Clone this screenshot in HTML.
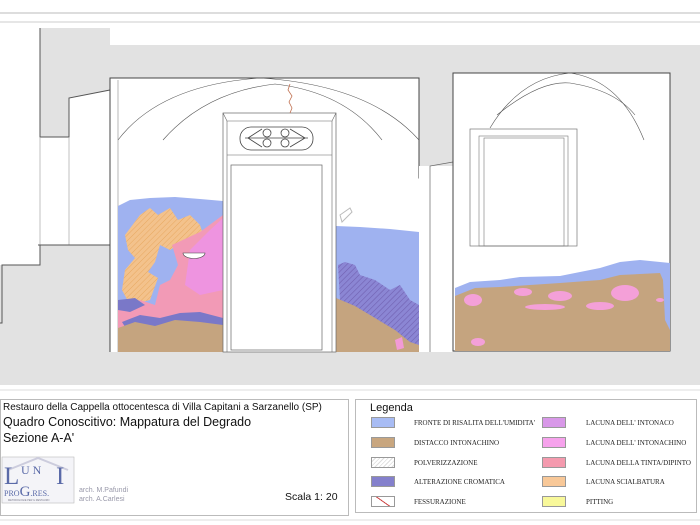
<!DOCTYPE html>
<html><head><meta charset="utf-8"><style>
body{margin:0;width:700px;height:525px;background:#fff;overflow:hidden;font-family:"Liberation Sans",sans-serif}
svg{position:absolute;left:0;top:0}
.t{position:absolute;white-space:nowrap;color:#111}
.lg{position:absolute;font-family:"Liberation Serif",serif;font-size:7px;color:#222}
.sw{position:absolute;width:24px;height:11px;border:1px solid #999;box-sizing:border-box}
</style></head><body>
<svg width="700" height="525" viewBox="0 0 700 525">
<defs>
<pattern id="h" width="4" height="4" patternUnits="userSpaceOnUse" patternTransform="rotate(45)"><line x1="0" y1="0" x2="0" y2="4" stroke="#7060b0" stroke-width="1.2"/></pattern>
<pattern id="ho" width="4" height="4" patternUnits="userSpaceOnUse" patternTransform="rotate(45)"><line x1="0" y1="0" x2="0" y2="4" stroke="#e8a860" stroke-width="1"/></pattern>
</defs>
<line x1="0" y1="13" x2="700" y2="13" stroke="#bbb"/>
<line x1="0" y1="22" x2="700" y2="22" stroke="#ccc"/>
<rect x="0" y="28" width="700" height="357" fill="#e2e2e2"/>
<rect x="0" y="28" width="40" height="237" fill="#fff"/>
<rect x="110" y="28" width="590" height="17" fill="#fff"/>
<polygon points="40,137 69,137 69,98 110,90 110,245 40,245" fill="#fff"/>
<polyline points="40,28 40,137 69,137 69,98 110,90" fill="none" stroke="#555"/>
<line x1="69" y1="137" x2="69" y2="245" stroke="#999" stroke-width=".6"/>
<line x1="40" y1="137" x2="40" y2="245" stroke="#999" stroke-width=".6"/>
<polyline points="38,245 110,245" stroke="#555" stroke-width="1"/>
<polyline points="0,323 2,323 2,265 40,265 40,245" fill="none" stroke="#555"/>
<rect x="110" y="78" width="309" height="274" fill="#fff"/>
<polyline points="110,352 110,78 419,78 419,178 430,178" fill="none" stroke="#444"/>
<line x1="118" y1="80" x2="118" y2="352" stroke="#888" stroke-width=".6"/>
<rect x="419" y="166" width="34" height="186" fill="#fff"/>
<polyline points="430,352 430,166 453,162" fill="none" stroke="#666" stroke-width=".7"/>
<rect x="453" y="73" width="217" height="278" fill="#fff" stroke="#444"/>
<path d="M118,206 L130,200 150,198 175,197 200,199 223,201 L223,352 L118,352Z" fill="#9fb2f0"/>
<path d="M125,235 L140,215 150,208 158,215 170,208 178,220 190,215 200,225 205,240 195,250 185,240 170,250 160,245 155,262 148,272 158,278 150,300 130,305 122,290 125,270 135,258 128,250Z" fill="#f3c28c"/>
<path d="M125,235 L140,215 150,208 158,215 170,208 178,220 190,215 200,225 205,240 195,250 185,240 170,250 160,245 155,262 148,272 158,278 150,300 130,305 122,290 125,270 135,258 128,250Z" fill="url(#ho)"/>
<path d="M172,245 L200,232 223,215 L223,330 L118,335 118,310 140,300 155,305 160,285 170,280 178,265Z" fill="#f29ab6"/>
<path d="M190,250 L210,230 223,218 L223,290 200,295 185,285Z" fill="#ee94e0"/>
<path d="M118,300 L135,298 145,305 130,312 118,310Z M122,322 L140,315 160,318 180,313 200,312 223,318 L223,330 160,330 130,335Z" fill="#7a78c8"/>
<path d="M118,328 L135,322 155,326 175,320 200,322 223,325 L223,352 L118,352Z" fill="#c5a47f"/>
<path d="M183,253 A10,5 0 0 0 205,253Z" fill="#fff" stroke="#444" stroke-width=".6"/>
<path d="M336,226 L360,227 390,229 419,232 L419,352 L336,352Z" fill="#9fb2f0"/>
<path d="M338,265 L345,262 355,265 360,275 375,280 390,290 400,285 410,300 419,305 L419,345 L400,340 385,325 370,315 355,310 340,300Z" fill="#8b86d4"/>
<path d="M338,265 L345,262 355,265 360,275 375,280 390,290 400,285 410,300 419,305 L419,345 L400,340 385,325 370,315 355,310 340,300Z" fill="url(#h)"/>
<path d="M336,298 L355,306 375,318 395,330 410,342 419,345 L419,352 L336,352Z" fill="#c5a47f"/>
<path d="M395,340 L402,337 404,348 397,350Z" fill="#f29ad6"/>
<path d="M340,215 L350,208 352,212 342,222Z" fill="none" stroke="#bbb"/>
<path d="M455,288 L470,282 500,280 520,277 560,276 600,268 620,262 640,260 670,263 L670,351 L455,351Z" fill="#9fb2f0"/>
<path d="M455,296 L475,288 500,287 530,285 560,283 600,280 620,275 660,273 663,280 665,320 670,330 L670,351 L455,351Z" fill="#c5a47f"/>
<g fill="#f4a0d8">
<ellipse cx="473" cy="300" rx="9" ry="6"/><ellipse cx="523" cy="292" rx="9" ry="4"/><ellipse cx="560" cy="296" rx="12" ry="5"/>
<ellipse cx="600" cy="306" rx="14" ry="4"/><ellipse cx="625" cy="293" rx="14" ry="8"/><ellipse cx="545" cy="307" rx="20" ry="3"/>
<ellipse cx="478" cy="342" rx="7" ry="4"/><ellipse cx="660" cy="300" rx="4" ry="2"/>
</g>
<path d="M118,140 Q160,85 260,78 Q370,85 419,140" fill="none" stroke="#555" stroke-width=".6"/>
<path d="M163,140 Q205,92 275,84 Q345,92 382,140" fill="none" stroke="#555" stroke-width=".6"/>
<path d="M490,128 Q520,78 570,73 Q620,80 644,140" fill="none" stroke="#555" stroke-width=".6"/>
<path d="M497,115 Q540,80 570,83 Q615,90 635,115" fill="none" stroke="#555" stroke-width=".6"/>
<rect x="223" y="113" width="113" height="239" fill="#fff" stroke="#666" stroke-width=".7"/>
<polyline points="223,113 227,121 332,121 336,113" fill="none" stroke="#666" stroke-width=".6"/>
<line x1="227" y1="155" x2="332" y2="155" stroke="#666" stroke-width=".6"/>
<line x1="227" y1="121" x2="227" y2="352" stroke="#666" stroke-width=".6"/>
<line x1="332" y1="121" x2="332" y2="352" stroke="#666" stroke-width=".6"/>
<rect x="231" y="165" width="91" height="185" fill="#fff" stroke="#666" stroke-width=".7"/>
<rect x="240" y="127" width="73" height="23" rx="11" fill="none" stroke="#444" stroke-width=".8"/>
<g fill="none" stroke="#444" stroke-width=".8"><circle cx="267" cy="133" r="4"/><circle cx="267" cy="143" r="4"/><circle cx="285" cy="133" r="4"/><circle cx="285" cy="143" r="4"/><path d="M248,138 L262,129 M248,138 L262,147 M305,138 L290,129 M305,138 L290,147 M245,138 H308"/></g>
<path d="M290,84 L288,90 292,96 289,102 292,108 290,113" fill="none" stroke="#c07050" stroke-width=".8"/>
<rect x="470" y="129" width="107" height="117" fill="#fff" stroke="#777" stroke-width=".7"/>
<rect x="479" y="136" width="89" height="110" fill="none" stroke="#777" stroke-width=".6"/>
<rect x="484" y="138" width="80" height="108" fill="none" stroke="#777" stroke-width=".6"/>
<line x1="0" y1="390" x2="700" y2="390" stroke="#ddd"/>
<rect x="0.5" y="399.5" width="348" height="116" fill="#fff" stroke="#bbb"/>
<rect x="355.5" y="399.5" width="341" height="113" fill="#fff" stroke="#bbb"/>
<line x1="0" y1="520" x2="700" y2="520" stroke="#ddd"/>
<rect x="2" y="457" width="72" height="46" fill="#f4f4f8" stroke="#bbb" stroke-width=".6"/>
<polyline points="8,470 38,458 68,470" fill="none" stroke="#ccd" stroke-width="2"/>
<text x="4" y="484" font-family="Liberation Serif" font-size="25" fill="#5a6aa8">L</text>
<text x="21" y="474" font-family="Liberation Serif" font-size="12" fill="#5a6aa8">U N</text>
<text x="56" y="484" font-family="Liberation Serif" font-size="25" fill="#5a6aa8">I</text>
<text x="4" y="496" font-family="Liberation Serif" font-size="8" fill="#5a6aa8">PRO<tspan font-size="15">G</tspan>.RES.</text>
<text x="8" y="501" font-family="Liberation Sans" font-size="2.5" fill="#778">METODOLOGIE PER IL RESTAURO</text>
</svg>
<div class="t" style="left:3px;top:402px;font-size:10px">Restauro della Cappella ottocentesca di Villa Capitani a Sarzanello (SP)</div>
<div class="t" style="left:3px;top:415px;font-size:12.5px">Quadro Conoscitivo: Mappatura del Degrado</div>
<div class="t" style="left:3px;top:431px;font-size:12.5px">Sezione A-A'</div>
<div class="t" style="left:79px;top:486px;font-size:7px;color:#99a;line-height:9px">arch. M.Pafundi<br>arch. A.Carlesi</div>
<div class="t" style="left:285px;top:491px;font-size:10.5px">Scala 1: 20</div>
<div class="t" style="left:370px;top:402px;font-size:11px">Legenda</div>
<div class="sw" style="left:371px;top:417px;background:#a8bcf4"></div>
<div class="sw" style="left:371px;top:437px;background:#c8a67f"></div>
<div class="sw" style="left:371px;top:457px;background:repeating-linear-gradient(135deg,#fff 0 2px,#ddd 2px 3px)"></div>
<div class="sw" style="left:371px;top:476px;background:#8480cc"></div>
<div class="sw" style="left:371px;top:496px;background:linear-gradient(35deg,#fff 47%,#c44 48%,#c44 52%,#fff 53%)"></div>
<div class="lg" style="left:414px;top:419px">FRONTE DI RISALITA DELL'UMIDITA'</div>
<div class="lg" style="left:414px;top:439px">DISTACCO INTONACHINO</div>
<div class="lg" style="left:414px;top:459px">POLVERIZZAZIONE</div>
<div class="lg" style="left:414px;top:478px">ALTERAZIONE CROMATICA</div>
<div class="lg" style="left:414px;top:498px">FESSURAZIONE</div>
<div class="sw" style="left:542px;top:417px;background:#d898e8"></div>
<div class="sw" style="left:542px;top:437px;background:#f6a2ec"></div>
<div class="sw" style="left:542px;top:457px;background:#f49aae"></div>
<div class="sw" style="left:542px;top:476px;background:#f8c898"></div>
<div class="sw" style="left:542px;top:496px;background:#f8f89a"></div>
<div class="lg" style="left:586px;top:419px">LACUNA DELL' INTONACO</div>
<div class="lg" style="left:586px;top:439px">LACUNA DELL' INTONACHINO</div>
<div class="lg" style="left:586px;top:459px">LACUNA DELLA TINTA/DIPINTO</div>
<div class="lg" style="left:586px;top:478px">LACUNA SCIALBATURA</div>
<div class="lg" style="left:586px;top:498px">PITTING</div>
</body></html>
